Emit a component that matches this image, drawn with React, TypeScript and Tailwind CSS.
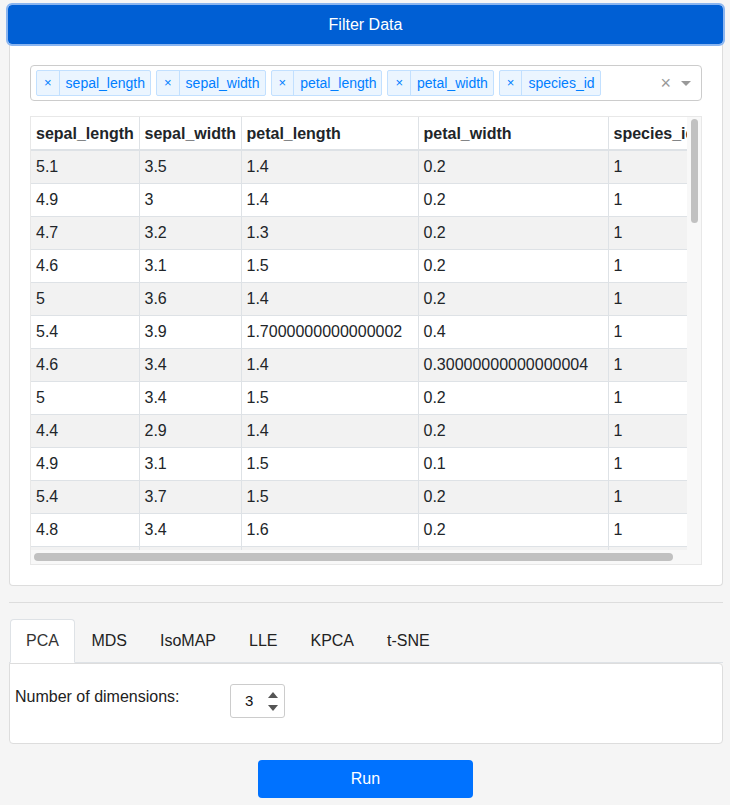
const columns = ["sepal_length", "sepal_width", "petal_length", "petal_width", "species_id"]

const rows = [
  ["5.1", "3.5", "1.4", "0.2", "1"],
  ["4.9", "3", "1.4", "0.2", "1"],
  ["4.7", "3.2", "1.3", "0.2", "1"],
  ["4.6", "3.1", "1.5", "0.2", "1"],
  ["5", "3.6", "1.4", "0.2", "1"],
  ["5.4", "3.9", "1.7000000000000002", "0.4", "1"],
  ["4.6", "3.4", "1.4", "0.30000000000000004", "1"],
  ["5", "3.4", "1.5", "0.2", "1"],
  ["4.4", "2.9", "1.4", "0.2", "1"],
  ["4.9", "3.1", "1.5", "0.1", "1"],
  ["5.4", "3.7", "1.5", "0.2", "1"],
  ["4.8", "3.4", "1.6", "0.2", "1"],
  ["4.8", "3", "1.4", "0.1", "1"],
]

const tabs = ["PCA", "MDS", "IsoMAP", "LLE", "KPCA", "t-SNE"]

const Chip = ({ label }: { label: string }) => (
  <div className="flex items-stretch rounded-[2px] border border-[#c2e0ff] bg-[#ebf5ff] text-[14px] leading-[24px] text-[#007eff]">
    <span className="border-r border-[#c2e0ff] px-[7px] text-[13px]">×</span>
    <span className="pl-[6px] pr-[5px]">{label}</span>
  </div>
)

export default function App() {
  return (
    <div className="min-h-screen bg-[#f5f5f5] pt-[5px] text-[#212529]" style={{ fontFamily: '"Liberation Sans", Arial, sans-serif' }}>
      <div className="ml-[8px] w-[715px]">
        <div className="flex h-[39px] items-center justify-center rounded-[4px] bg-[#005fd4] text-[16px] text-white outline-2 outline-[#8ab5f0]">
          Filter Data
        </div>
      </div>

      <div className="ml-[9px] w-[714px] rounded-b-[4px] border border-t-0 border-[#dddddd] bg-white px-[20px] pt-[21px] pb-[20px]">
        {/* multi select */}
        <div className="flex h-[36px] items-center rounded-[4px] border border-[#cccccc] pl-[5px] pr-[10px]">
          <div className="flex flex-1 gap-[5px]">
            {columns.map((c) => (
              <Chip key={c} label={c} />
            ))}
          </div>
          <span className="mr-[10px] text-[18px] leading-none text-[#999]">×</span>
          <span className="h-0 w-0 border-x-[5px] border-t-[5px] border-x-transparent border-t-[#999]" />
        </div>

        {/* table */}
        <div className="mt-[15px] grid grid-cols-[656px_14px] grid-rows-[433px_14px] border border-[#e8e8e8] bg-[#f8f8f8]">
          <div className="overflow-hidden bg-white">
            <table className="table-fixed border-collapse text-[16px] leading-6" style={{ width: 680 }}>
              <colgroup>
                <col className="w-[108px]" />
                <col className="w-[102px]" />
                <col className="w-[177px]" />
                <col className="w-[190px]" />
                <col className="w-[103px]" />
              </colgroup>
              <thead>
                <tr>
                  {columns.map((c) => (
                    <th key={c} className="overflow-hidden whitespace-nowrap border border-b-2 border-t-0 border-l-0 border-[#dee2e6] px-[5px] pt-[5px] pb-[3px] text-left font-bold">
                      {c}
                    </th>
                  ))}
                </tr>
              </thead>
              <tbody>
                {rows.map((r, i) => (
                  <tr key={i} className={i % 2 === 0 ? "bg-[#f2f2f2]" : "bg-white"}>
                    {r.map((v, j) => (
                      <td key={j} className="whitespace-nowrap border border-l-0 border-[#dee2e6] px-[5px] py-[4px]">
                        {v}
                      </td>
                    ))}
                  </tr>
                ))}
              </tbody>
            </table>
          </div>
          <div className="flex justify-center pt-[2px]">
            <div className="h-[104px] w-[7px] rounded-full bg-[#c1c1c1]" />
          </div>
          <div className="flex items-center pl-[3px]">
            <div className="h-[8px] w-[639px] rounded-full bg-[#c1c1c1]" />
          </div>
          <div />
        </div>
      </div>

      <div className="ml-[9px] mt-[16px] w-[714px] border-t border-[#dddddd]" />

      {/* tabs */}
      <div className="ml-[9px] mt-[16px] w-[714px]">
        <div className="flex border-b border-[#dee2e6] pl-px text-[16px] leading-6">
          {tabs.map((t, i) => (
            <div
              key={t}
              className={
                i === 0
                  ? "-mb-px rounded-t-[4px] border border-b-white border-[#dee2e6] bg-white px-[15px] pt-[9px] pb-[8px] text-[#333]"
                  : "border border-transparent px-[15.5px] pt-[9px] pb-[8px] text-[#222]"
              }
            >
              {t}
            </div>
          ))}
        </div>
        <div className="flex h-[81px] items-start rounded-b-[4px] rounded-tr-[4px] border border-[#dddddd] bg-white pl-[5px] pt-[20px]">
          <div className="mt-[1px] w-[215px] text-[16px] leading-6 text-[#222]">Number of dimensions:</div>
          <div className="flex h-[34px] w-[55px] items-center rounded-[3px] border border-[#cccccc] pl-[14px] pr-[6px]">
            <span className="flex-1 text-[15px] text-[#111]">3</span>
            <div className="flex flex-col items-center gap-[7px]">
              <span className="h-0 w-0 border-x-[5px] border-b-[6px] border-x-transparent border-b-[#555]" />
              <span className="h-0 w-0 border-x-[5px] border-t-[6px] border-x-transparent border-t-[#555]" />
            </div>
          </div>
        </div>
      </div>

      <div className="mt-[16px] flex justify-center pl-[1px]">
        <button className="h-[38px] w-[215px] rounded-[4px] bg-[#0072ff] text-[16px] text-white">Run</button>
      </div>
    </div>
  )
}
